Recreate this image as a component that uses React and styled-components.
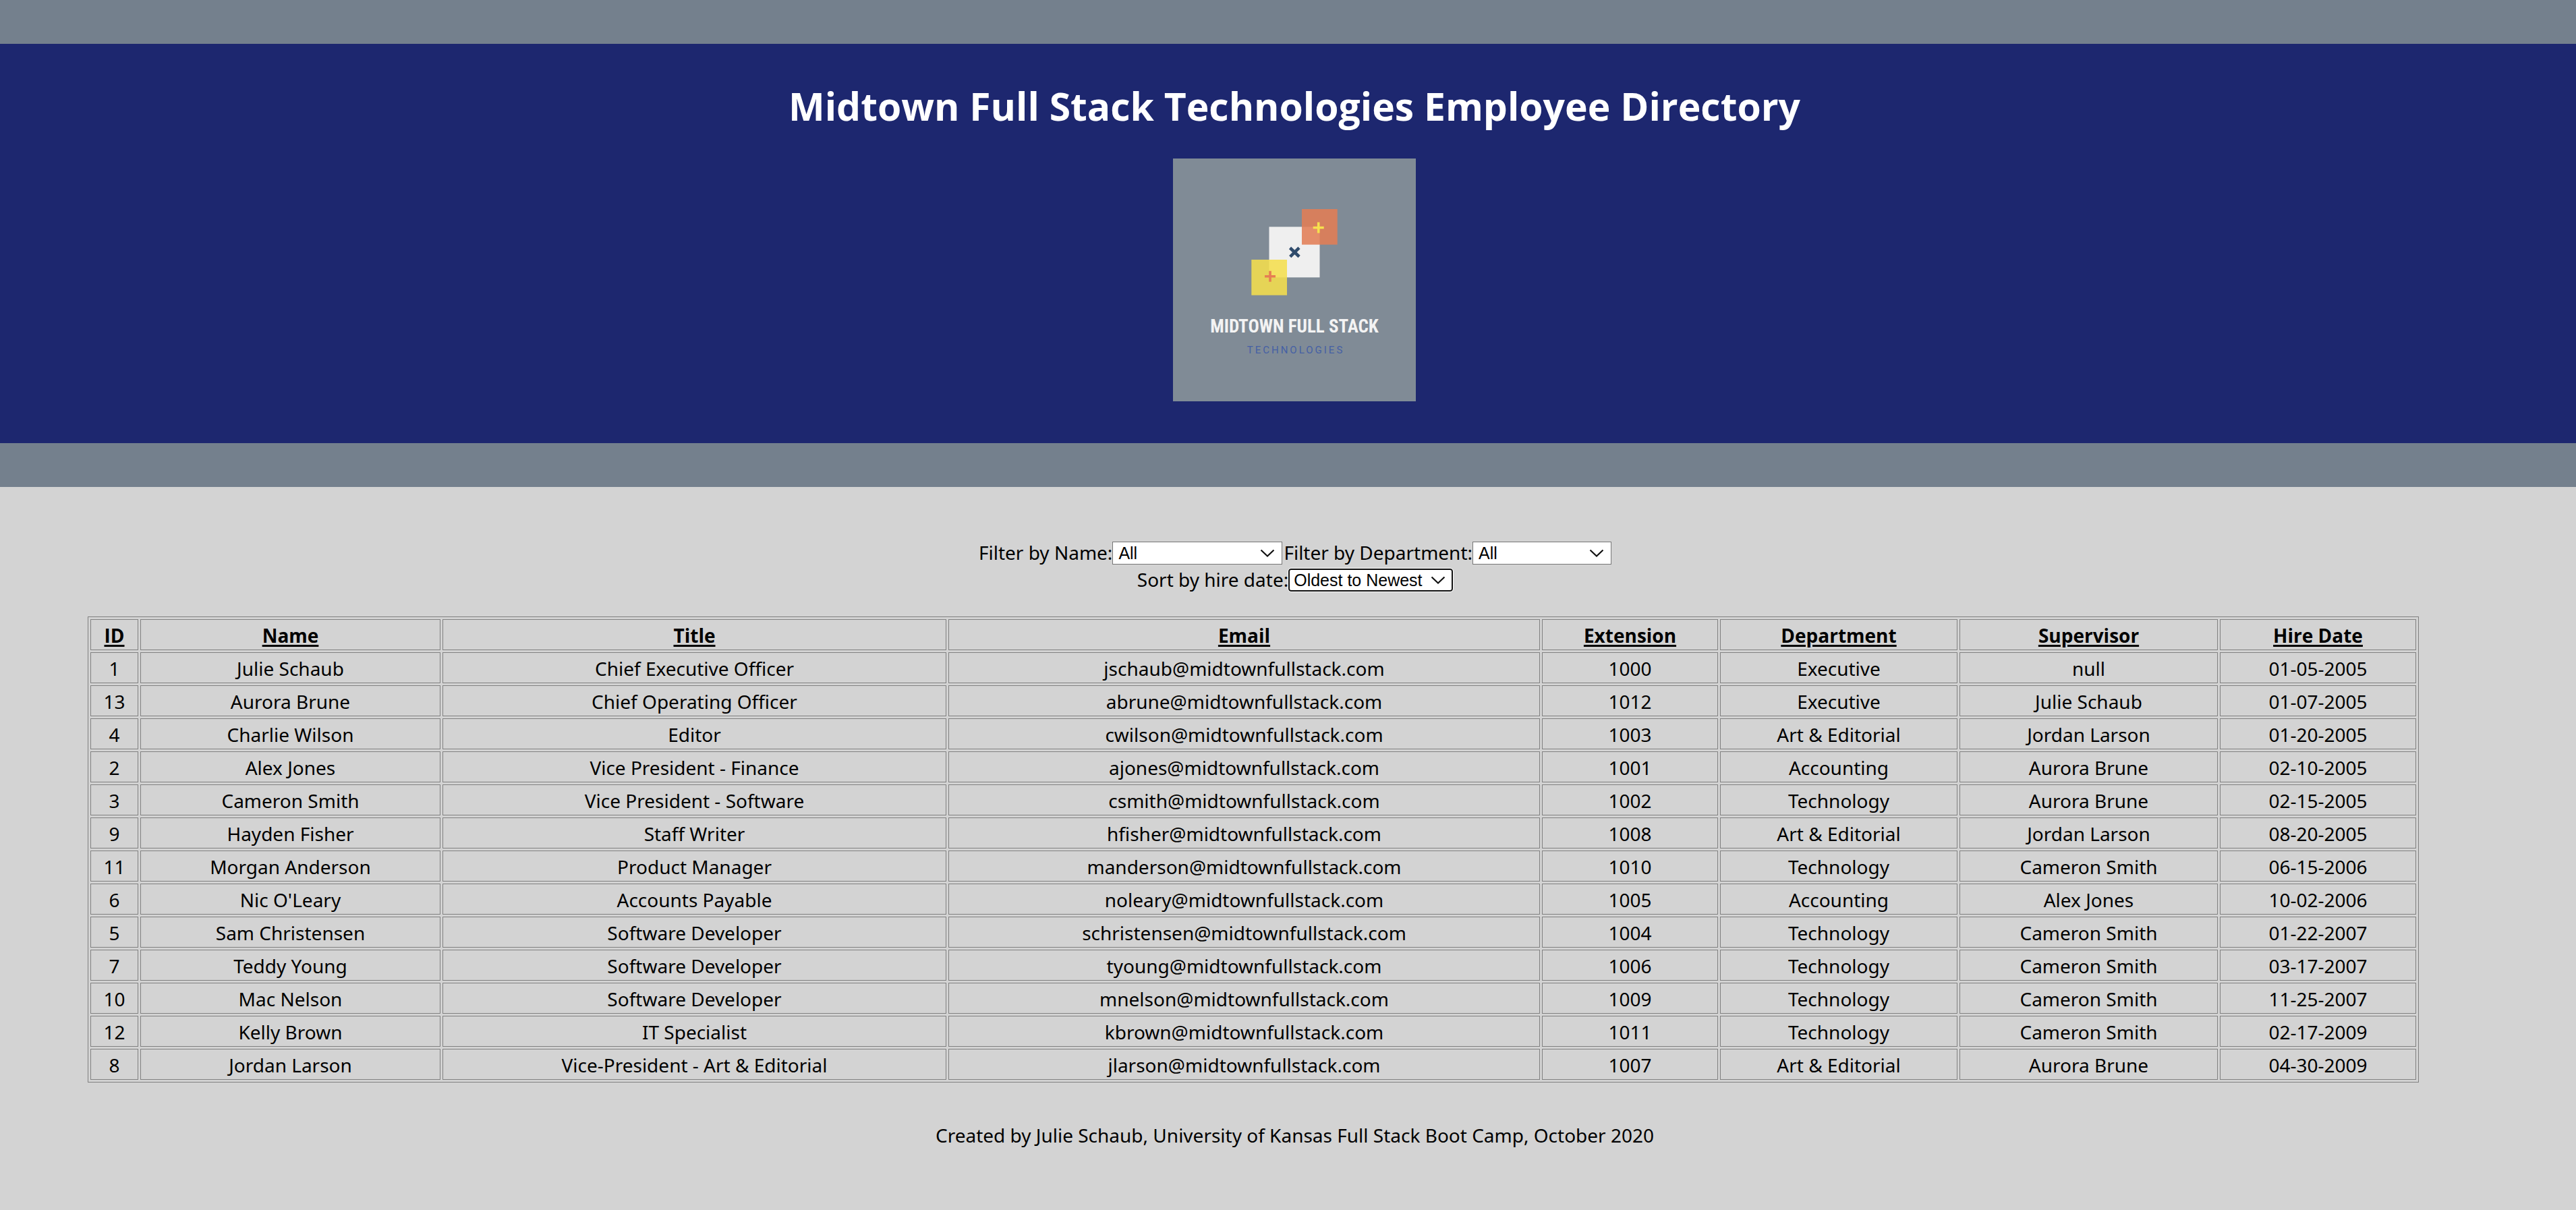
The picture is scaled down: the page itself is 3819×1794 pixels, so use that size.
import React, { useState } from "react";
import styled, { createGlobalStyle } from "styled-components";

const GlobalStyle = createGlobalStyle`
  * { box-sizing: border-box; }
  body {
    margin: 0;
    background: #d3d3d3;
    color: #000;
    font-family: "Noto Sans", "Open Sans", sans-serif;
    font-size: 28px;
    line-height: 40px;
  }
`;

const Page = styled.div`
  min-height: 100vh;
  background: #d3d3d3;
`;

const Banner = styled.header`
  display: flex;
  flex-direction: column;
  align-items: center;
  padding: 44px 0 62px 19px;
  background: #1d276f;
  border-top: 65px solid #74808d;
  border-bottom: 65px solid #74808d;
`;

const Title = styled.h1`
  margin: 0 0 30px;
  color: #fff;
  font-family: "Open Sans", "Noto Sans", sans-serif;
  font-size: 57px;
  font-weight: 700;
  line-height: 96px;
  text-align: center;
`;

const Logo = styled.svg`
  display: block;
  width: 360px;
  height: 360px;
`;

const Filters = styled.form`
  display: flex;
  flex-direction: column;
  align-items: center;
  padding: 78px 0 34px 19px;
`;

const FilterRow = styled.div`
  display: flex;
  align-items: center;
  height: 40px;
`;

const FilterLabel = styled.label`
  margin-left: 2px;
  padding-bottom: 2px;
`;

const SelectBox = styled.span`
  position: relative;
  display: flex;
  width: ${(p) => p.$width}px;
  height: 34px;
`;

const Select = styled.select`
  appearance: none;
  width: 100%;
  height: 34px;
  margin: 0;
  padding: 0 32px 0 ${(p) => (p.$active ? 6 : 8)}px;
  background: #fff;
  color: #000;
  border: ${(p) => (p.$active ? "2px solid #101010" : "1px solid #767676")};
  border-radius: ${(p) => (p.$active ? 4 : 0)}px;
  outline: ${(p) => (p.$active ? "1px solid #fff" : "none")};
  font-family: "Liberation Sans", Arial, sans-serif;
  font-size: 25px;
  line-height: 30px;
`;

const Chevron = styled.svg`
  position: absolute;
  top: 11px;
  right: 11px;
  width: 22px;
  height: 14px;
  pointer-events: none;
`;

const TableArea = styled.main`
  padding: 0 233px 0 130px;
`;

const Table = styled.table`
  width: 100%;
  table-layout: fixed;
  border: 1px solid #808080;
  border-collapse: separate;
  border-spacing: 3px;
  text-align: center;
`;

const HeadCell = styled.th`
  padding: 3px 2px 1px;
  border: 1px solid #808080;
  font-family: "Open Sans", "Noto Sans", sans-serif;
  font-weight: 700;
  text-decoration: underline;
  text-decoration-thickness: 3px;
  text-underline-offset: 3px;
  text-decoration-skip-ink: auto;
`;

const Cell = styled.td`
  padding: 3px 2px 1px;
  border: 1px solid #808080;
`;

const Footer = styled.footer`
  padding: 58px 0 60px 20px;
  text-align: center;
`;

const columns = [
  ["ID", 71],
  ["Name", 445],
  ["Title", 747],
  ["Email", 877],
  ["Extension", 261],
  ["Department", 352],
  ["Supervisor", 383],
  ["Hire Date", 291],
];

const employees = [
  [1, "Julie Schaub", "Chief Executive Officer", "jschaub", 1000, "Executive", "null", "01-05-2005"],
  [13, "Aurora Brune", "Chief Operating Officer", "abrune", 1012, "Executive", "Julie Schaub", "01-07-2005"],
  [4, "Charlie Wilson", "Editor", "cwilson", 1003, "Art & Editorial", "Jordan Larson", "01-20-2005"],
  [2, "Alex Jones", "Vice President - Finance", "ajones", 1001, "Accounting", "Aurora Brune", "02-10-2005"],
  [3, "Cameron Smith", "Vice President - Software", "csmith", 1002, "Technology", "Aurora Brune", "02-15-2005"],
  [9, "Hayden Fisher", "Staff Writer", "hfisher", 1008, "Art & Editorial", "Jordan Larson", "08-20-2005"],
  [11, "Morgan Anderson", "Product Manager", "manderson", 1010, "Technology", "Cameron Smith", "06-15-2006"],
  [6, "Nic O'Leary", "Accounts Payable", "noleary", 1005, "Accounting", "Alex Jones", "10-02-2006"],
  [5, "Sam Christensen", "Software Developer", "schristensen", 1004, "Technology", "Cameron Smith", "01-22-2007"],
  [7, "Teddy Young", "Software Developer", "tyoung", 1006, "Technology", "Cameron Smith", "03-17-2007"],
  [10, "Mac Nelson", "Software Developer", "mnelson", 1009, "Technology", "Cameron Smith", "11-25-2007"],
  [12, "Kelly Brown", "IT Specialist", "kbrown", 1011, "Technology", "Cameron Smith", "02-17-2009"],
  [8, "Jordan Larson", "Vice-President - Art & Editorial", "jlarson", 1007, "Art & Editorial", "Aurora Brune", "04-30-2009"],
].map((row) => row.map((value, i) => (i === 3 ? `${value}@midtownfullstack.com` : value)));

const unique = (index) => ["All", ...new Set(employees.map((row) => row[index]))];

const dateKey = (row) => row[7].slice(6) + row[7].slice(0, 5);

function Field({ id, label, width, active, value, onChange, options }) {
  return (
    <>
      <FilterLabel htmlFor={id}>{label}</FilterLabel>
      <SelectBox $width={width}>
        <Select id={id} $active={active} value={value} onChange={(e) => onChange(e.target.value)}>
          {options.map((option) => (
            <option key={option}>{option}</option>
          ))}
        </Select>
        <Chevron viewBox="0 0 22 14" aria-hidden="true">
          <path d="M1.5 1.5 L11 10.5 L20.5 1.5" fill="none" stroke="#101010" strokeWidth="2.2" />
        </Chevron>
      </SelectBox>
    </>
  );
}

function CompanyLogo() {
  return (
    <Logo viewBox="0 0 360 360" role="img" aria-label="Midtown Full Stack Technologies">
      <rect width="360" height="360" fill="#808b96" />
      <rect x="142.5" y="101.3" width="75" height="75" fill="#efefef" />
      <rect x="191" y="75" width="52.7" height="52.7" fill="#e27d55" fillOpacity="0.87" />
      <rect x="116.3" y="150" width="52.7" height="52.7" fill="#f5df4d" fillOpacity="0.87" />
      <path d="M207.7 102.5h16M215.7 94.5v16" stroke="#f6e04e" strokeWidth="3.6" />
      <path d="M136 174.7h16M144 166.7v16" stroke="#e67e52" strokeWidth="3.6" />
      <path d="M173.5 132.5l13.6 13M187 132.3l-13.3 13.4" stroke="#2f4b6c" strokeWidth="4.6" />
      <text
        x="180"
        y="258"
        textAnchor="middle"
        fill="#f3f3f3"
        fontFamily="'Liberation Sans Narrow', 'Roboto Condensed', Roboto, sans-serif"
        fontSize="27"
        fontWeight="700"
      >
        MIDTOWN FULL STACK
      </text>
      <text
        x="182"
        y="289"
        textAnchor="middle"
        fill="#4560a5"
        fontFamily="Roboto, sans-serif"
        fontSize="15"
        letterSpacing="3"
      >
        TECHNOLOGIES
      </text>
    </Logo>
  );
}

export default function App() {
  const [name, setName] = useState("All");
  const [department, setDepartment] = useState("All");
  const [order, setOrder] = useState("Oldest to Newest");

  const direction = order === "Oldest to Newest" ? 1 : -1;
  const rows = employees
    .filter((row) => name === "All" || row[1] === name)
    .filter((row) => department === "All" || row[5] === department)
    .sort((a, b) => direction * dateKey(a).localeCompare(dateKey(b)));

  return (
    <Page>
      <GlobalStyle />
      <Banner>
        <Title>Midtown Full Stack Technologies Employee Directory</Title>
        <CompanyLogo />
      </Banner>
      <Filters>
        <FilterRow>
          <Field id="name" label="Filter by Name:" width={252} value={name} onChange={setName} options={unique(1)} />
          <Field
            id="department"
            label="Filter by Department:"
            width={206}
            value={department}
            onChange={setDepartment}
            options={unique(5)}
          />
        </FilterRow>
        <FilterRow>
          <Field
            id="order"
            label="Sort by hire date:"
            width={244}
            active
            value={order}
            onChange={setOrder}
            options={["Oldest to Newest", "Newest to Oldest"]}
          />
        </FilterRow>
      </Filters>
      <TableArea>
        <Table>
          <colgroup>
            {columns.map(([label, width]) => (
              <col key={label} width={width} />
            ))}
          </colgroup>
          <thead>
            <tr>
              {columns.map(([label]) => (
                <HeadCell key={label} scope="col">
                  {label}
                </HeadCell>
              ))}
            </tr>
          </thead>
          <tbody>
            {rows.map((row) => (
              <tr key={row[0]}>
                {row.map((value, i) => (
                  <Cell key={i}>{value}</Cell>
                ))}
              </tr>
            ))}
          </tbody>
        </Table>
      </TableArea>
      <Footer>Created by Julie Schaub, University of Kansas Full Stack Boot Camp, October 2020</Footer>
    </Page>
  );
}
